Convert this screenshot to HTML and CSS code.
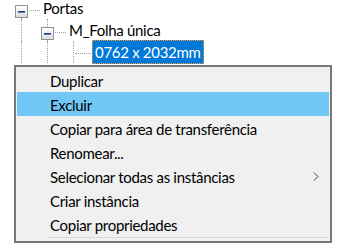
FILE: index.html
```html
<!DOCTYPE html>
<html lang="pt">
<head>
<meta charset="utf-8">
<link rel="stylesheet" href="styles.css">
</head>
<body>
<div class="tree">
  <div class="row">
    <div class="own first"><span class="hline"></span><span class="box"><span class="minus"></span></span></div>
    <span class="label">Portas</span>
  </div>
  <div class="row">
    <div class="guide"></div>
    <div class="own"><span class="hline"></span><span class="box"><span class="minus"></span></span></div>
    <span class="label">M_Folha única</span>
  </div>
  <div class="row">
    <div class="guide"></div>
    <div class="guide"></div>
    <div class="own leaf"><span class="hline"></span></div>
    <span class="label selected">0762 x 2032mm</span>
  </div>
</div>

<div class="menu">
  <div class="item">Duplicar</div>
  <div class="item hot">Excluir</div>
  <div class="item">Copiar para área de transferência</div>
  <div class="item">Renomear...</div>
  <div class="item sub">Selecionar todas as instâncias
    <svg class="chev" width="6" height="9" viewBox="0 0 6 9"><path d="M1 0.5 L5 4.5 L1 8.5" fill="none" stroke="#444" stroke-width="1"/></svg>
  </div>
  <div class="item">Criar instância</div>
  <div class="item">Copiar propriedades</div>
  <div class="sep"></div>
</div>
</body>
</html>
```
FILE: styles.css
```css
html, body {
  margin: 0;
  padding: 0;
  background: #ffffff;
}
body {
  width: 340px;
  height: 244px;
  overflow: hidden;
  position: relative;
  font-family: Lato, Roboto, sans-serif;
  font-size: 15px;
  letter-spacing: -0.3px;
  color: #000;
}
.tree {
  margin-top: -3px;
  padding-left: 8px;
}
.row {
  display: flex;
  align-items: center;
  height: 22px;
  line-height: 22px;
}
.guide {
  width: 26px;
  height: 22px;
  flex: none;
  position: relative;
}
.guide::before {
  content: "";
  position: absolute;
  left: 13px;
  top: 0;
  bottom: 0;
  border-left: 1px dotted #a0a0a0;
}
.own {
  width: 32px;
  height: 22px;
  flex: none;
  position: relative;
}
.own::before {
  content: "";
  position: absolute;
  left: 13px;
  top: 0;
  bottom: 0;
  border-left: 1px dotted #a0a0a0;
}
.own.first::before {
  top: 13px;
}
.hline {
  position: absolute;
  left: 14px;
  right: 0;
  top: 13px;
  border-top: 1px dotted #a0a0a0;
}
.own.leaf .hline {
  top: 12px;
  left: 15px;
  right: 1px;
}
.box {
  position: absolute;
  left: 7px;
  top: 8px;
  width: 11px;
  height: 11px;
  border: 1px solid #929292;
  background: linear-gradient(#ffffff, #dcdcdc);
  box-sizing: content-box;
  display: flex;
  align-items: center;
  justify-content: center;
}
.minus {
  width: 7px;
  height: 2px;
  background: linear-gradient(#1c3f7a 50%, #5a7ab0 50%);
}
.label {
  border: 1px solid transparent;
  padding: 0 2px;
  line-height: 22px;
  white-space: nowrap;
}
.label.selected {
  background: #0078d7;
  color: #fff;
  border: 1px dotted #ff9933;
}

.menu {
  position: absolute;
  left: 14px;
  top: 65px;
  width: 312px;
  border: 2px solid #777777;
  background: #f0f0f0;
  padding: 1px 1px 0 1px;
}
.item {
  height: 24px;
  box-sizing: border-box;
  padding: 2px 0 0 33px;
  line-height: 22px;
  white-space: nowrap;
  position: relative;
}
.item.hot {
  background: #71c8f7;
}
.chev {
  position: absolute;
  right: 10px;
  top: 8px;
}
.sep {
  margin: 1px 0 1px 30px;
  height: 1px;
  border-top: 1px solid #d7d7d7;
  padding-bottom: 1px;
}
```
